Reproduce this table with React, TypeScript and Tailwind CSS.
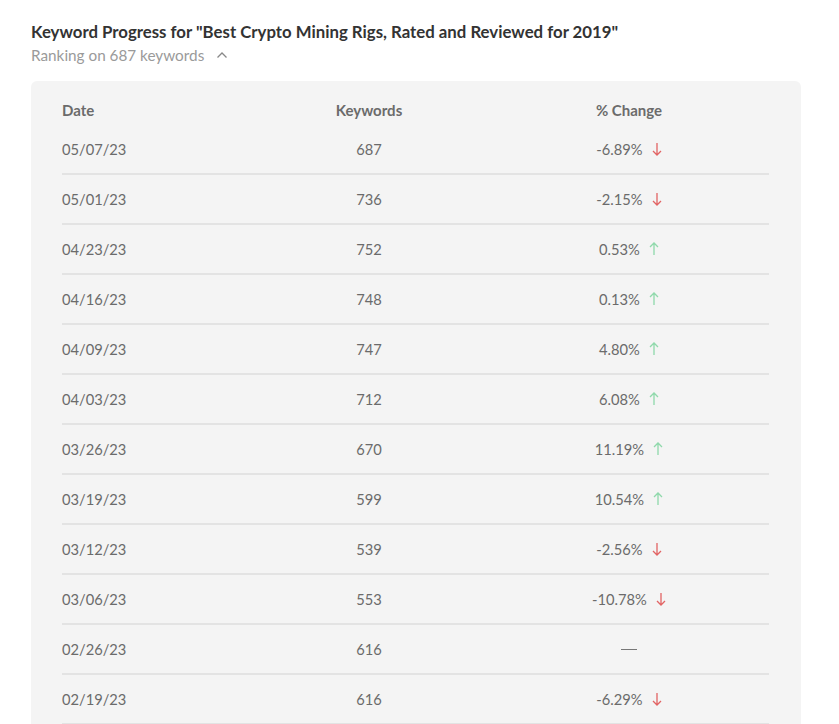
type Row = {
  date: string;
  keywords: number;
  change: string | null;
  dir: 'up' | 'down' | null;
};

const rows: Row[] = [
  { date: '05/07/23', keywords: 687, change: '-6.89%', dir: 'down' },
  { date: '05/01/23', keywords: 736, change: '-2.15%', dir: 'down' },
  { date: '04/23/23', keywords: 752, change: '0.53%', dir: 'up' },
  { date: '04/16/23', keywords: 748, change: '0.13%', dir: 'up' },
  { date: '04/09/23', keywords: 747, change: '4.80%', dir: 'up' },
  { date: '04/03/23', keywords: 712, change: '6.08%', dir: 'up' },
  { date: '03/26/23', keywords: 670, change: '11.19%', dir: 'up' },
  { date: '03/19/23', keywords: 599, change: '10.54%', dir: 'up' },
  { date: '03/12/23', keywords: 539, change: '-2.56%', dir: 'down' },
  { date: '03/06/23', keywords: 553, change: '-10.78%', dir: 'down' },
  { date: '02/26/23', keywords: 616, change: null, dir: null },
  { date: '02/19/23', keywords: 616, change: '-6.29%', dir: 'down' },
];

function Arrow({ dir }: { dir: 'up' | 'down' }) {
  const color = dir === 'up' ? '#8fd9ab' : '#e26464';
  return (
    <svg
      width="10"
      height="14"
      viewBox="0 0 10 14"
      fill="none"
      stroke={color}
      strokeWidth={1.3}
      className="ml-[9px]"
    >
      {dir === 'down' ? (
        <path d="M5 1v12M1 9l4 4 4-4" />
      ) : (
        <path d="M5 13V1M1 5l4-4 4 4" />
      )}
    </svg>
  );
}

export default function App() {
  return (
    <div
      className="min-h-screen bg-white pl-[31px] pr-[38px] pt-[20px]"
      style={{ fontFamily: 'Lato, "Noto Sans", sans-serif' }}
    >
      <h1 className="text-[16.8px] font-bold leading-[24px] text-[#333]">
        Keyword Progress for "Best Crypto Mining Rigs, Rated and Reviewed for 2019"
      </h1>
      <div className="mt-px flex items-center text-[15.3px] leading-[20px] text-[#9a9a9a]">
        Ranking on 687 keywords
        <svg
          width="12"
          height="8"
          viewBox="0 0 12 8"
          fill="none"
          stroke="#888"
          strokeWidth={1.3}
          className="ml-[12px]"
        >
          <path d="M1.5 6.5L6 2l4.5 4.5" />
        </svg>
      </div>

      <div className="mt-[16px] rounded-[6px] bg-[#f4f4f4] pb-[8px] pl-[31px] pr-[32px] pt-[14px]">
        <div className="grid h-[30px] grid-cols-[187px_240px_1fr] items-center text-[15px] font-bold text-[#6b6b6b]">
          <div>Date</div>
          <div className="text-center">Keywords</div>
          <div className="text-center">% Change</div>
        </div>
        {rows.map((r) => (
          <div
            key={r.date}
            className="grid h-[50px] grid-cols-[187px_240px_1fr] items-center border-b-2 border-[#e3e3e3] text-[14.7px] text-[#6b6b6b]"
          >
            <div>{r.date}</div>
            <div className="text-center">{r.keywords}</div>
            <div className="flex items-center justify-center">
              {r.change && r.dir ? (
                <>
                  <span>{r.change}</span>
                  <Arrow dir={r.dir} />
                </>
              ) : (
                <span className="block h-px w-[16px] bg-[#777]" />
              )}
            </div>
          </div>
        ))}
      </div>
    </div>
  );
}
